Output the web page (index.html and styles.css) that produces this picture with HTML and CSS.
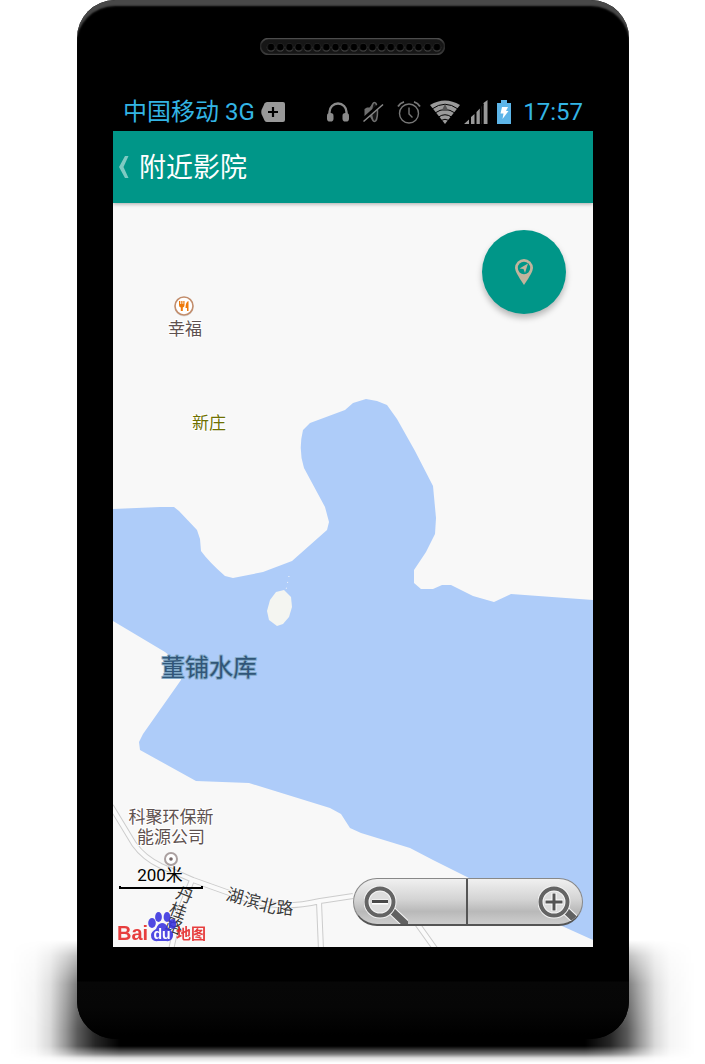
FILE: index.html
```html
<!DOCTYPE html>
<html lang="zh-CN">
<head>
<meta charset="utf-8">
<meta name="viewport" content="width=device-width, initial-scale=1">
<title>附近影院</title>
<link rel="stylesheet" href="styles.css">
</head>
<body>
<div class="stage">
<main class="phone">
  <div class="earpiece">
    <svg class="speaker" viewBox="0 0 185 17" aria-hidden="true">
      <defs>
        <linearGradient id="rim" x1="0" y1="0" x2="0" y2="1"><stop offset="0" stop-color="#4c4c4c"/><stop offset=".4" stop-color="#242424"/><stop offset="1" stop-color="#3d3d3d"/></linearGradient>
        <pattern id="holes" x="6.4" y="0" width="9.22" height="17" patternUnits="userSpaceOnUse">
          <circle cx="4.6" cy="9.6" r="4" fill="#474747"/><circle cx="4.6" cy="9" r="3.8" fill="#202020"/><circle cx="4.6" cy="9" r="3.2" fill="#000"/>
        </pattern>
      </defs>
      <rect x=".5" y=".5" width="184" height="16" rx="8" fill="#161616" stroke="url(#rim)" stroke-width="1.6"/>
      <rect x="6.4" y="2" width="175.2" height="13" fill="url(#holes)"/>
    </svg>
  </div>
  <div class="screen">
    <div class="status">
      <span class="carrier">中国移动 3G</span>
      <svg class="tag" viewBox="0 0 24 20" aria-hidden="true"><path d="M6 0H22Q24 0 24 2V18Q24 20 22 20H6Q4.500 20 3.500 18.500L.5 12Q0 10 .5 8L3.500 1.500Q4.500 0 6 0Z" fill="#999"/><path d="M12 5V15M7 10H17" stroke="#000" stroke-width="2.200"/></svg>
      <span class="grow"></span>
      <svg class="i22" viewBox="0 0 22 22" aria-hidden="true"><path d="M2.500 16V11A8.500 8.500 0 0 1 19.500 11V16" fill="none" stroke="#8b8b8b" stroke-width="2.400"/><rect x="0" y="12" width="6.500" height="8.500" rx="2.800" fill="#8b8b8b"/><rect x="15.500" y="12" width="6.500" height="8.500" rx="2.800" fill="#8b8b8b"/></svg>
      <svg class="i22 gap-l" viewBox="0 0 22 22" aria-hidden="true"><path d="M2.500 8L5 6.500H7.500L12 1V21L9 17.500L7.500 15H2.500Z" fill="#6e6e6e"/><ellipse cx="12.500" cy="11" rx="3" ry="9.500" fill="#151515" stroke="#6e6e6e" stroke-width="1.500"/><path d="M1 19L19.500 2.500" stroke="#000" stroke-width="4"/><path d="M1.500 20.500L21 3.500" stroke="#8a8a8a" stroke-width="1.500"/></svg>
      <svg class="i24 gap-l" viewBox="0 0 24 24" aria-hidden="true"><g fill="none" stroke="#777" stroke-width="1.400"><circle cx="12" cy="13.500" r="9.500"/><path d="M12 7.500V14L15.500 17.500"/><path d="M1 6.500Q3 3 7 1.800M23 6.500Q21 3 17 1.800" stroke-width="1.800"/></g></svg>
      <svg class="wifi gap-m" viewBox="0 0 30 24" aria-hidden="true"><path d="M15 24L0 5Q15-4 30 5Z" fill="#9a9a9a"/><g fill="none" stroke="#000" stroke-width="1"><path d="M2 9Q15-.5 28 9M5 13Q15 6 25 13M8.500 17Q15 12.500 21.500 17M11 20.500Q15 18 19 20.500"/></g><path d="M15 4L18.500 11H11.500Z" fill="#555"/></svg>
      <svg class="i24 gap-s" viewBox="0 0 24 24" aria-hidden="true"><path d="M0 24L5 19.500V24ZM7 24V17L10.500 14V24ZM12.500 24V12L15.800 8.500V24ZM17.800 24V6.500L20 4.500V24ZM19.500 24V3L23.500 0V24Z" fill="#999"/><path d="M18.800 4V24" stroke="#000" stroke-width="1.800"/></svg>
      <svg class="battery gap-m" viewBox="0 0 14 24" aria-hidden="true"><path d="M4 0H10V3H14V24H0V3H4Z" fill="#5db5e8"/><path d="M5 7H11L9 11H11.500L5.500 19L6.500 13.500H3.500Z" fill="#fff"/></svg>
      <time class="clock">17:57</time>
    </div>
    <header class="bar">
      <button class="back" type="button" aria-label="返回"><svg viewBox="0 0 10 22" aria-hidden="true"><path d="M9.500 0H6L0 11L6 22H9.500L4.500 11Z" fill="#7ecac2"/></svg></button>
      <h1 class="title">附近影院</h1>
    </header>
    <section class="map">
      <svg class="tiles" viewBox="113 203 480 744" preserveAspectRatio="xMidYMid slice" role="img" aria-label="董铺水库地图">
        <rect x="113" y="203" width="480" height="744" fill="#f8f8f8"/>
        <path fill="#aeccf9" d="M113 509L160 507L174 507L179 511L197 530L200 539L201 551Q209 562 225 576L233 578L263 572L292 561L327 530L329 522L325 507L304 468Q298 450 303 430L310 423L345 410L353 403L366 399L377 401L387 405L397 419L415 451L433 486L436 518L435 534L426 552L414 570V583L421 589H433L442 585H451L473 596L494 602L511 594L593 600V940L562 926L467 877L433 860L410 848L361 833L350 828L341 814L330 808L249 783L196 781L140 750L139 742L143 734L181 680L182 670L170 656L165 652L113 621Z"/>
        <path fill="#f4f5f1" d="M276 592L284 590L291 597L292 607L289 617L283 624L277 626L269 620L267 611L270 600Z"/>
        <path d="M289 576L286 590" stroke="#f8f8f8" stroke-width="1" stroke-dasharray="1 5"/>
        <g fill="none" stroke-linejoin="round">
          <path stroke="#ccc" stroke-width="6" d="M111 806L134 844Q144 858 161 866L193 880L235 895Q275 912 320 901L353 896M319 902L321 950M416 922L436 950M192 880L180 910L171 950"/>
          <path stroke="#fafafa" stroke-width="4" d="M111 806L134 844Q144 858 161 866L193 880L235 895Q275 912 320 901L353 896M319 902L321 950M416 922L436 950M192 880L180 910L171 950"/>
        </g>
        <circle cx="184" cy="307" r="9.500" fill="#ddd"/><circle cx="184" cy="306" r="9" fill="#fff" stroke="#c28d6c" stroke-width="1.600"/>
        <path fill="#ee7a0a" d="M179 301H180.300V304H181.200V301H182.500V304H183.300V301H184.500V305Q184.500 307 182.800 307.500V311H180.800V307.500Q179 307 179 305ZM188.500 301V311H187V308H185.500Q185.500 302 188.500 301Z"/>
        <circle cx="171" cy="859" r="6" fill="#fff" stroke="#aaa0a0" stroke-width="2"/><circle cx="171" cy="859" r="1.800" fill="#756767"/>
        <g class="labels">
          <text class="poi" x="185" y="335">幸福</text>
          <text class="village" x="209" y="429">新庄</text>
          <text class="lake" x="209" y="676">董铺水库</text>
          <text class="poi" y="823"><tspan x="171">科聚环保新</tspan><tspan x="171" dy="20">能源公司</tspan></text>
          <g class="road">
            <text transform="translate(235 896) rotate(15)" y="6">湖</text><text transform="translate(252 901) rotate(15)" y="6">滨</text><text transform="translate(268 906) rotate(14)" y="6">北</text><text transform="translate(285 908) rotate(4)" y="6">路</text>
            <text transform="translate(185 895) rotate(22)" y="6">丹</text><text transform="translate(178 911) rotate(20)" y="6">桂</text><text transform="translate(174 926) rotate(20)" y="6">路</text>
          </g>
        </g>
        <g opacity=".88">
          <g fill="#3832e0"><ellipse cx="152" cy="923" rx="3.800" ry="5"/><ellipse cx="158.500" cy="917" rx="3.400" ry="5"/><ellipse cx="167" cy="917" rx="3.400" ry="5"/><ellipse cx="172.500" cy="924" rx="3.800" ry="5"/><path d="M162 923Q166 923 168 928Q174 932 173 936Q172 942 166 941H158Q151 942 151 935Q151 932 156 929Q158 923 162 923Z"/></g>
          <text class="bai" x="117" y="940">Bai</text><text class="du" x="162" y="939">du</text><text class="ditu" x="176" y="939">地图</text>
        </g>
        <text class="scale" x="160" y="881">200米</text>
        <path d="M120 886V888H202V886" fill="none" stroke="#000" stroke-width="2"/>
      </svg>
      <button class="locate" type="button" aria-label="定位"><svg viewBox="0 0 18 26" aria-hidden="true"><path fill="#c2b49d" d="M9 0A9 9 0 0 1 18 9Q18 13 9 26Q0 13 0 9A9 9 0 0 1 9 0Z"/><circle cx="9" cy="9" r="6.200" fill="#009688"/><path fill="#c2b49d" d="M13 4.500L10 14L8.500 10L4.500 9.500Z"/></svg></button>
      <div class="zoom">
        <button class="out" type="button" aria-label="缩小"><svg viewBox="0 0 44 38" aria-hidden="true"><path d="M26 23L42 38" stroke="#f5f5f5" stroke-width="9"/><path d="M26 23L43 39" stroke="#616161" stroke-width="7"/><circle cx="16" cy="16" r="13.500" fill="#ddd" stroke="#f4f4f4" stroke-width="6"/><circle cx="16" cy="16" r="13.500" fill="none" stroke="#646464" stroke-width="4"/><path d="M8 16H24" stroke="#fff" stroke-width="5"/><path d="M8 15.500H24" stroke="#484848" stroke-width="3"/></svg></button>
        <button class="in" type="button" aria-label="放大"><svg viewBox="0 0 44 38" aria-hidden="true"><path d="M26 23L42 38" stroke="#f5f5f5" stroke-width="9"/><path d="M26 23L43 39" stroke="#616161" stroke-width="7"/><circle cx="16" cy="16" r="13.500" fill="#ddd" stroke="#f4f4f4" stroke-width="6"/><circle cx="16" cy="16" r="13.500" fill="none" stroke="#646464" stroke-width="4"/><path d="M7 16H25M16 7V25" stroke="#fff" stroke-width="5"/><path d="M7.500 16H24.500M16 7.500V24.500" stroke="#555" stroke-width="3"/></svg></button>
      </div>
    </section>
  </div>
  <div class="chin"></div>
</main>
</div>
</body>
</html>
```
FILE: styles.css
```css
* { box-sizing: border-box; }
body { margin: 0; background: #fff; font-family: Roboto, "Noto Sans CJK SC", sans-serif; }
button { border: 0; padding: 0; background: none; cursor: pointer; }
svg { display: block; flex: none; }

.stage { position: relative; padding: 0 76px 25px 77px; }
.stage::before {
  content: "";
  position: absolute;
  inset: auto 0 0 0;
  height: 124px;
  background: linear-gradient(90deg, transparent 10px, #0000000a 35px, #00000026 50px, #00000066 65px, #000000a6 78px, #000000d9 95px, #000 120px, #000 calc(100% - 120px), #000000d9 calc(100% - 95px), #000000a6 calc(100% - 78px), #00000066 calc(100% - 65px), #00000026 calc(100% - 50px), #0000000a calc(100% - 35px), transparent calc(100% - 10px));
  -webkit-mask-image: linear-gradient(transparent 0, #0006 16px, #000c 44px, #000 90px, #000 106px, #0008 114px, #0002 118px, transparent 123px);
  mask-image: linear-gradient(transparent 0, #0006 16px, #000c 44px, #000 90px, #000 106px, #0008 114px, #0002 118px, transparent 123px);
}
.phone {
  position: relative;
  overflow: hidden;
  border-radius: 38px;
  background: #000;
  box-shadow: inset 0 7px 2px -1px #484848;
}
.earpiece { height: 93px; padding: 38px 1px 0 0; display: flex; justify-content: center; }
.speaker { width: 185px; height: 17px; }
.screen { padding: 0 36px; }
.chin { height: 92px; background: linear-gradient(#000 34px, #070707 35px, #060606 60px, #000 88px); }

.status { display: flex; align-items: center; height: 38px; padding: 0 10px; color: #33b5e5; }
.carrier { font-size: 24px; line-height: 36px; white-space: nowrap; }
.clock { margin-left: 12px; font-size: 24px; line-height: 36px; }
.tag { width: 24px; height: 20px; margin-left: 6px; }
.grow { flex: 1; }
.i22 { width: 22px; height: 22px; }
.i24 { width: 24px; height: 24px; }
.wifi { width: 30px; height: 24px; }
.battery { width: 14px; height: 24px; }
.gap-s { margin-left: 4px; }
.gap-m { margin-left: 9px; }
.gap-l { margin-left: 13px; }

.bar {
  position: relative;
  z-index: 1;
  display: flex;
  align-items: center;
  gap: 10px;
  height: 72px;
  padding: 0 6px;
  background: #009688;
  box-shadow: 0 1px 4px #0005;
}
.back svg { width: 10px; height: 22px; }
.title { margin: 0; padding-top: 2px; color: #fff; font-size: 27px; font-weight: 400; line-height: 40px; }

.map { position: relative; }
.tiles { width: 100%; height: auto; aspect-ratio: 480 / 744; }
.labels text { font-family: "Noto Sans CJK SC", sans-serif; text-anchor: middle; paint-order: stroke; stroke: #fff; stroke-width: 2px; stroke-linejoin: round; }
.labels .poi { font-size: 17px; fill: #5f5250; }
.labels .village { font-size: 17px; fill: #6e7000; }
.labels .lake { font-size: 24px; fill: #315678; stroke: #84abc9; }
.labels .road text { font-size: 17px; fill: #3b3b3b; stroke-width: 1px; }
.scale { font-size: 17px; text-anchor: middle; fill: #000; }
.bai { font: bold 20px "Liberation Sans", sans-serif; fill: #e52525; }
.du { font: bold 14px "Liberation Sans", sans-serif; fill: #fff; text-anchor: middle; }
.ditu { font: bold 15px "Noto Sans CJK SC", sans-serif; fill: #e52525; }

.locate {
  position: absolute;
  top: 27px;
  right: 27px;
  display: grid;
  place-items: center;
  width: 84px;
  height: 84px;
  border-radius: 50%;
  background: #009688;
  box-shadow: 0 4px 6px #0004;
}
.locate svg { width: 18px; height: 26px; }

.zoom {
  position: absolute;
  right: 10px;
  bottom: 21px;
  display: grid;
  grid-template-columns: 1fr 1fr;
  width: 230px;
  height: 48px;
  overflow: hidden;
  border: 1px solid #888;
  border-bottom: 2px solid #555;
  border-radius: 24px;
  background: linear-gradient(#f0f0f0, #d4d4d4 45%, #b9b9b9 72%, #cdcdcd);
}
.zoom button { display: flex; align-items: flex-end; }
.zoom svg { width: 44px; height: 38px; }
.zoom .out { padding-left: 10px; border-right: 2px solid #555; }
.zoom .in { justify-content: flex-end; }
```
